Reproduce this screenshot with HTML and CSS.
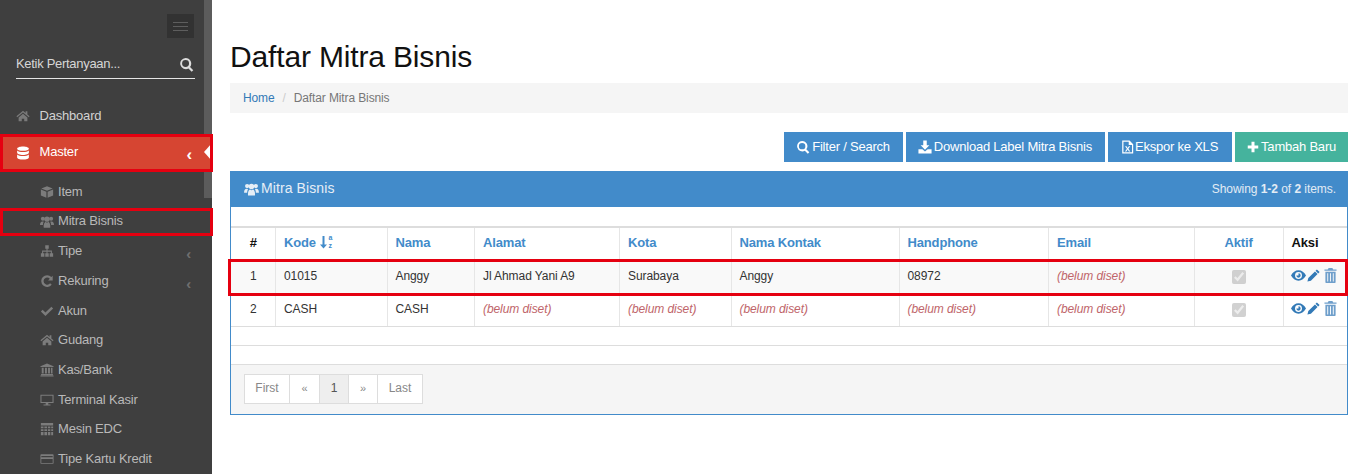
FILE: index.html
```html
<!DOCTYPE html>
<html lang="id">
<head>
<meta charset="utf-8">
<title>Daftar Mitra Bisnis</title>
<link rel="stylesheet" href="styles.css">
</head>
<body>
<svg class="sprite" xmlns="http://www.w3.org/2000/svg">
  <symbol id="i-search" viewBox="0 0 16 16"><path fill-rule="evenodd" d="M7 1a6 6 0 0 1 4.800 9.600l3.400 3.400-1.700 1.700-3.400-3.400A6 6 0 1 1 7 1zm0 2.300a3.700 3.700 0 1 0 0 7.400 3.700 3.700 0 0 0 0-7.400z"/></symbol>
  <symbol id="i-home" viewBox="0 0 16 16"><path d="M8 2 0.500 8.300l.9 1L8 3.900l6.600 5.400.9-1L13 6.200V2.600h-2v1.900zM3 9.600V14h3.600v-3h2.800v3H13V9.600L8 5.500z"/></symbol>
  <symbol id="i-db" viewBox="0 0 16 16"><path d="M8 .5c3.700 0 6.700 1.100 6.700 2.500S11.700 5.500 8 5.500 1.300 4.400 1.300 3 4.300 .5 8 .5zM1.300 5c1.300 1.200 3.900 1.800 6.700 1.800s5.400-.6 6.700-1.800v2.700C14.700 9 11.700 10.200 8 10.200S1.300 9 1.300 7.700zm0 4.700c1.300 1.200 3.900 1.800 6.700 1.800s5.400-.6 6.700-1.800V13c0 1.400-3 2.500-6.700 2.500S1.300 14.400 1.300 13z"/></symbol>
  <symbol id="i-cube" viewBox="0 0 16 16"><path d="M8 1.500 14.500 4 8 6.600 1.500 4zM1 5l6.300 2.600v7L1 12zm14 0v7l-6.300 2.600v-7z"/></symbol>
  <symbol id="i-users" viewBox="0 0 16 14"><circle cx="3.300" cy="3.300" r="2.300"/><circle cx="12.700" cy="3.300" r="2.300"/><circle cx="8" cy="3.800" r="3"/><path d="M0 10.500C0 7.800 1 6.300 2.800 6.300c.6 0 1.200.2 1.500.5-.6.900-1 2.100-1 3.700H0zm16 0c0-2.700-1-4.200-2.800-4.200-.6 0-1.200.2-1.500.5.600.9 1 2.100 1 3.700H16zM4.300 13.500C3.800 10 5 7 6.700 7c.4.500.9.700 1.300.7s.9-.2 1.300-.7c1.700 0 2.900 3 2.400 6.500z"/></symbol>
  <symbol id="i-tree" viewBox="0 0 16 16"><path d="M6 1.500h4v4H8.600v2h5v3h1.400v4h-4v-4h1.400V8.800H8.600v1.700H10v4H6v-4h1.400V8.800H3.600v1.700H5v4H1v-4h1.400v-3h5v-2H6z"/></symbol>
  <symbol id="i-refresh" viewBox="0 0 16 16"><path d="M14.500 2v5.300H9.200l2-2A4.300 4.300 0 0 0 4 8a4.300 4.300 0 0 0 7.600 2.700l1.800 1.500A6.700 6.700 0 1 1 13 3.500z"/></symbol>
  <symbol id="i-check" viewBox="0 0 16 16"><path d="M1 8.500 3 6.500 6.200 9.700 13 3l2 2-8.800 8.800z"/></symbol>
  <symbol id="i-bank" viewBox="0 0 16 16"><path d="M8 .5 15.500 3.600v1H.5v-1zM2 5.500h2.200v6.500H2zm3.700 0h2.200v6.500H5.700zm3.500 0h2.200v6.500H9.200zm3.300 0h1.800v6.500h-1.800zM1.200 12.700h13.600v1.200H1.200zM.5 14.400h15v1.100H.5z"/></symbol>
  <symbol id="i-desktop" viewBox="0 0 16 16"><path fill-rule="evenodd" d="M.5 2h15v9.500h-6v1.700H12v1H4v-1h2.500v-1.700h-6zm1.200 1.200v7h12.600v-7z"/></symbol>
  <symbol id="i-calc" viewBox="0 0 16 16"><path d="M1 1h14v3H1zM1 5h3v2.200H1zm4 0h3v2.200H5zm4 0h2.800v2.200H9zm3.800 0H15v2.200h-2.200zM1 8.200h3v2.200H1zm4 0h3v2.200H5zm4 0h2.800v2.200H9zm3.800 0H15v2.200h-2.200zM1 11.400h3V15H1zm4 0h3V15H5zm4 0h2.800V15H9zm3.800 0H15V15h-2.200z"/></symbol>
  <symbol id="i-card" viewBox="0 0 16 16"><path fill-rule="evenodd" d="M1.500 2.500h13a1 1 0 0 1 1 1v9a1 1 0 0 1-1 1h-13a1 1 0 0 1-1-1v-9a1 1 0 0 1 1-1zm0 2v1.600h13V4.500zm0 3.600v4.400h13V8.100z"/></symbol>
  <symbol id="i-download" viewBox="0 0 16 16"><path d="M6 .5h4v5.500h3L8 11 3 6h3zM.5 10.500H5l3 2.700 3-2.700h4.500v5H.5z"/></symbol>
  <symbol id="i-xls" viewBox="0 0 16 16"><path fill-rule="evenodd" d="M1.500 0h9L15 4.500V16H1.500zm1.500 1.500v13h10.500V5.500H9.500v-4zM5 7h1.800L8.200 9.300 9.600 7h1.800l-2.300 3.200 2.400 3.300H9.700L8.200 11.200 6.700 13.500H4.900l2.400-3.300z"/></symbol>
  <symbol id="i-plus" viewBox="0 0 16 16"><path d="M6 1h4v5h5v4h-5v5H6v-5H1V6h5z"/></symbol>
  <symbol id="i-eye" viewBox="0 0 16 16"><path fill-rule="evenodd" d="M8 2.500c3.400 0 6.200 2.200 8 5.500-1.800 3.300-4.600 5.500-8 5.500S1.800 11.300 0 8c1.800-3.300 4.600-5.500 8-5.500zM8 4.300a3.700 3.700 0 1 0 0 7.400 3.700 3.700 0 0 0 0-7.400zm0 1.400a2.300 2.300 0 1 1-2.300 2.300H8z"/></symbol>
  <symbol id="i-pencil" viewBox="0 0 16 16"><path d="M12.200 .5 15.500 3.800 13.800 5.500 10.500 2.200zM9.800 3 13 6.200 4.800 14.400.5 15.500l1.100-4.300z"/></symbol>
  <symbol id="i-trash" viewBox="0 0 14 16"><path fill-rule="evenodd" d="M5 0h4l1 1.500h3.500V3H.5V1.500H4zM1.500 4h11v11.200a.8.8 0 0 1-.8.8H2.300a.8.8 0 0 1-.8-.8zm2 1.500V14.500h1V5.500zm3 0V14.500h1V5.500zm3 0V14.500h1V5.500z"/></symbol>
</svg>

<div class="app">
  <aside class="sidebar">
    <div class="scroll-thumb"></div>
    <div class="toggle-wrap">
      <button class="toggle" type="button"><span></span><span></span><span></span></button>
    </div>
    <div class="search">
      <span>Ketik Pertanyaan...</span>
      <svg class="search-icon"><use href="#i-search"/></svg>
    </div>
    <nav class="nav">
      <a class="top"><svg class="ico"><use href="#i-home"/></svg>Dashboard</a>
      <a class="top active"><svg class="ico"><use href="#i-db"/></svg>Master<b class="chev">‹</b></a>
      <ul class="sub">
        <li><svg class="ico"><use href="#i-cube"/></svg>Item</li>
        <li class="marked"><svg class="ico"><use href="#i-users"/></svg>Mitra Bisnis</li>
        <li><svg class="ico"><use href="#i-tree"/></svg>Tipe<b class="chev">‹</b></li>
        <li><svg class="ico"><use href="#i-refresh"/></svg>Rekuring<b class="chev">‹</b></li>
        <li><svg class="ico"><use href="#i-check"/></svg>Akun</li>
        <li><svg class="ico"><use href="#i-home"/></svg>Gudang</li>
        <li><svg class="ico"><use href="#i-bank"/></svg>Kas/Bank</li>
        <li><svg class="ico"><use href="#i-desktop"/></svg>Terminal Kasir</li>
        <li><svg class="ico"><use href="#i-calc"/></svg>Mesin EDC</li>
        <li><svg class="ico"><use href="#i-card"/></svg>Tipe Kartu Kredit</li>
      </ul>
    </nav>
  </aside>

  <main class="main">
    <h1>Daftar Mitra Bisnis</h1>
    <div class="breadcrumb"><a>Home</a><i>/</i><span>Daftar Mitra Bisnis</span></div>
    <div class="toolbar">
      <a class="btn filter"><svg><use href="#i-search"/></svg>Filter / Search</a>
      <a class="btn dl"><svg><use href="#i-download"/></svg>Download Label Mitra Bisnis</a>
      <a class="btn xls"><svg><use href="#i-xls"/></svg>Ekspor ke XLS</a>
      <a class="btn green"><svg><use href="#i-plus"/></svg>Tambah Baru</a>
    </div>
    <section class="panel">
      <header class="panel-head">
        <h2><svg><use href="#i-users"/></svg>Mitra Bisnis</h2>
        <p>Showing <b>1-2</b> of <b>2</b> items.</p>
      </header>
      <div class="table-wrap">
        <div class="row-mark"></div>
        <table>
          <colgroup>
            <col class="c1"><col class="c2"><col class="c3"><col class="c4"><col class="c5"><col class="c6"><col class="c7"><col class="c8"><col class="c9"><col class="c10">
          </colgroup>
          <thead>
            <tr>
              <th class="ctr dark">#</th>
              <th>Kode <svg class="sort" viewBox="0 0 14 14"><path d="M2.500 1h2v8.500H7L3.500 13.500 0 9.500h2.500z"/><text x="8.500" y="5" class="sort-t">a</text><text x="8.500" y="12.500" class="sort-t">z</text></svg></th>
              <th>Nama</th><th>Alamat</th><th>Kota</th><th>Nama Kontak</th><th>Handphone</th><th>Email</th>
              <th class="ctr">Aktif</th>
              <th class="dark">Aksi</th>
            </tr>
          </thead>
          <tbody>
            <tr class="odd">
              <td class="ctr">1</td><td>01015</td><td>Anggy</td><td>Jl Ahmad Yani A9</td><td>Surabaya</td><td>Anggy</td><td>08972</td><td><em>(belum diset)</em></td>
              <td class="ctr"><input type="checkbox" checked disabled></td>
              <td class="acts"><svg class="a-eye"><use href="#i-eye"/></svg><svg class="a-pen"><use href="#i-pencil"/></svg><svg class="a-trash"><use href="#i-trash"/></svg></td>
            </tr>
            <tr>
              <td class="ctr">2</td><td>CASH</td><td>CASH</td><td><em>(belum diset)</em></td><td><em>(belum diset)</em></td><td><em>(belum diset)</em></td><td><em>(belum diset)</em></td><td><em>(belum diset)</em></td>
              <td class="ctr"><input type="checkbox" checked disabled></td>
              <td class="acts"><svg class="a-eye"><use href="#i-eye"/></svg><svg class="a-pen"><use href="#i-pencil"/></svg><svg class="a-trash"><use href="#i-trash"/></svg></td>
            </tr>
          </tbody>
        </table>
      </div>
      <div class="gap-line"></div>
      <footer class="panel-foot">
        <ul class="pager">
          <li>First</li><li class="sm">«</li><li class="cur">1</li><li class="sm">»</li><li>Last</li>
        </ul>
      </footer>
    </section>
  </main>
</div>
</body>
</html>
```

FILE: styles.css
```css
* { box-sizing: border-box; }
html, body { margin: 0; height: 474px; overflow: hidden; background: #fff; }
body { font: 12px/1.4 "Liberation Sans", Arial, sans-serif; color: #333; }
.sprite { position: absolute; width: 0; height: 0; }
.app { display: flex; height: 474px; }

/* sidebar */
.sidebar { position: relative; z-index: 2; width: 212px; flex: none; background: #3f3f3f; color: #c4c4c4; font-size: 13px; letter-spacing: -0.2px; }
.scroll-thumb { position: absolute; top: 0; right: 0; width: 8px; height: 198px; background: #5c5c5c; }
.toggle-wrap { display: flex; justify-content: flex-end; padding: 14px 18px 0 0; }
.toggle { display: flex; flex-direction: column; justify-content: center; gap: 3px; width: 27px; height: 24px; padding: 0 6px; border: 0; background: #323232; }
.toggle span { display: block; height: 1px; background: #5e5e5e; }
.search { display: flex; justify-content: space-between; align-items: center; height: 25px; margin: 16px 17px 0 16px; padding: 0 1px 4px 0; border-bottom: 1px solid #e6e6e6; color: #d6d6d6; font-size: 13px; letter-spacing: -0.3px; }
.search-icon { width: 15px; height: 15px; fill: #dcdcdc; }
.nav { margin-top: 19px; }
.top { position: relative; display: flex; align-items: center; height: 36px; padding-left: 16px; color: #d2d2d2; }
.top .ico { width: 14px; height: 14px; margin-right: 9.500px; fill: #7a7a7a; }
.top.active { background: #d64532; color: #fff; padding-top: 1px; }
.top.active .ico { fill: #fff; }
.top.active::before { content: ""; position: absolute; right: 0; top: 9px; border: 9px solid transparent; border-left-width: 0; border-right: 8px solid #fff; }
.top.active::after, .marked::after { content: ""; position: absolute; left: 0; right: -1px; border: 3px solid #e50010; pointer-events: none; box-sizing: border-box; }
.top.active::after { top: 0; bottom: -2px; }
.sub { list-style: none; margin: 0; padding: 7px 0 0; }
.sub li { position: relative; display: flex; align-items: center; height: 29.7px; padding-left: 40px; color: #b9b9b9; font-size: 13px; white-space: nowrap; }
.sub .ico { width: 14px; height: 14px; margin-right: 4px; fill: #7c7c7c; }
.marked::after { top: 1px; height: 28px; }
.chev { position: absolute; right: 21px; top: calc(50% + 2px); transform: translateY(-50%); font: bold 15px/1 "Liberation Sans", sans-serif; color: #6f6f6f; }
.top .chev { color: #fff; right: 20px; font-size: 17px; }

/* main */
.main { flex: 1; min-width: 0; padding: 40px 17px 0 18px; }
h1 { margin: 0 0 10px; font-size: 30px; line-height: 33px; font-weight: 400; color: #111; letter-spacing: -0.16px; }
.breadcrumb { height: 30px; padding: 0 13px; display: flex; align-items: center; background: #f5f5f5; color: #777; font-size: 12px; letter-spacing: -0.12px; }
.breadcrumb a { color: #337ab7; }
.breadcrumb i { font-style: normal; color: #ccc; padding: 0 8px; }

.toolbar { display: flex; justify-content: flex-end; gap: 3px; margin-top: 19px; }
.btn { display: flex; align-items: center; height: 30px; padding: 0 12px; background: #428bca; color: #fff; font-size: 13px; letter-spacing: -0.22px; white-space: nowrap; }
.btn svg { width: 14px; height: 14px; fill: #fff; margin-right: 2px; }
.btn.filter { padding-right: 13px; }
.btn.dl { padding-right: 13px; }
.btn.xls { padding: 0 14px 0 13px; }
.btn.xls svg { width: 13px; margin-right: 1px; }
.btn.green { background: #45b39d; }
.btn.green svg { width: 12px; height: 12px; }

.panel { margin-top: 9px; height: 244px; border: 1px solid #428bca; border-top: 0; background: #fff; }
.panel-head { display: flex; justify-content: space-between; align-items: center; height: 36px; margin: 0 -1px; padding: 0 12px 0 14px; background: #428bca; color: #fff; }
.panel-head h2 { display: flex; align-items: center; margin: 0; font-size: 14px; font-weight: 400; color: #e6eef6; letter-spacing: 0.1px; }
.panel-head h2 svg { width: 15px; height: 13px; fill: #e6eef6; margin-right: 2px; }
.panel-head p { margin: 0; font-size: 12px; color: #e2ecf5; letter-spacing: -0.05px; }

.table-wrap { position: relative; padding-top: 19px; }
.row-mark { position: absolute; left: -3px; right: -1px; top: 52px; height: 37px; border: 3px solid #e50010; z-index: 1; pointer-events: none; }
table { width: 1116px; border-collapse: collapse; table-layout: fixed; border-top: 2px solid #ddd; }
.c1 { width: 44px; } .c2 { width: 112px; } .c3 { width: 87px; } .c4 { width: 145px; } .c5 { width: 112px; }
.c6 { width: 168px; } .c7 { width: 149px; } .c8 { width: 146px; } .c9 { width: 89px; } .c10 { width: 64px; }
th, td { height: 33px; padding: 0 8px 0 8px; border: 1px solid #e6e6e6; border-top: 0; text-align: left; white-space: nowrap; overflow: hidden; letter-spacing: -0.08px; }
tr > :first-child { border-left: 0; padding-left: 9px; }
tr > :nth-child(2), tr > :nth-child(4), tr > :nth-child(5), tr > :nth-child(8) { padding-left: 8.500px; }
tr > :last-child { border-right: 0; }
tbody td { border-bottom: 1px solid #ddd; }
th { padding-bottom: 2px; font-size: 13px; font-weight: 700; color: #428bca; letter-spacing: -0.15px; }
th.dark { color: #111; }
.ctr { text-align: center; }
.odd td { background: #f9f9f9; }
em { color: #c0656a; }
.sort { width: 14px; height: 14px; vertical-align: -2px; fill: #428bca; margin-left: 1px; }
.sort-t { font: 700 7px "Liberation Sans", sans-serif; fill: #428bca; }
input[type=checkbox] { width: 14px; height: 14px; margin: 0; vertical-align: middle; }
.acts { padding: 0 0 2px 7px; }
.acts svg { display: inline-block; vertical-align: middle; height: 15px; }
.a-eye { width: 15px; fill: #337ab7; }
.a-pen { width: 13px; margin-left: 1px; fill: #337ab7; }
.a-trash { width: 13px; margin-left: 4px; fill: #6f9fcb; }

.gap-line { height: 37px; position: relative; }
.gap-line::after { content: ""; position: absolute; left: 0; right: 0; top: 18px; height: 1px; background: #ddd; }
.panel-foot { height: 50px; padding: 9px 13px; background: #f5f5f5; border-top: 1px solid #ddd; }
.pager { display: flex; list-style: none; margin: 0; padding: 0; width: max-content; }
.pager li { display: flex; align-items: center; justify-content: center; width: 46px; height: 30px; margin-left: -1px; background: #fff; border: 1px solid #ddd; color: #888; font-size: 12px; }
.pager li:first-child { margin-left: 0; }
.pager li.sm { width: 31px; font-size: 11px; }
.pager li.cur { width: 30px; background: #eee; color: #555; }
.pager .cur + .sm { width: 30px; }
```
